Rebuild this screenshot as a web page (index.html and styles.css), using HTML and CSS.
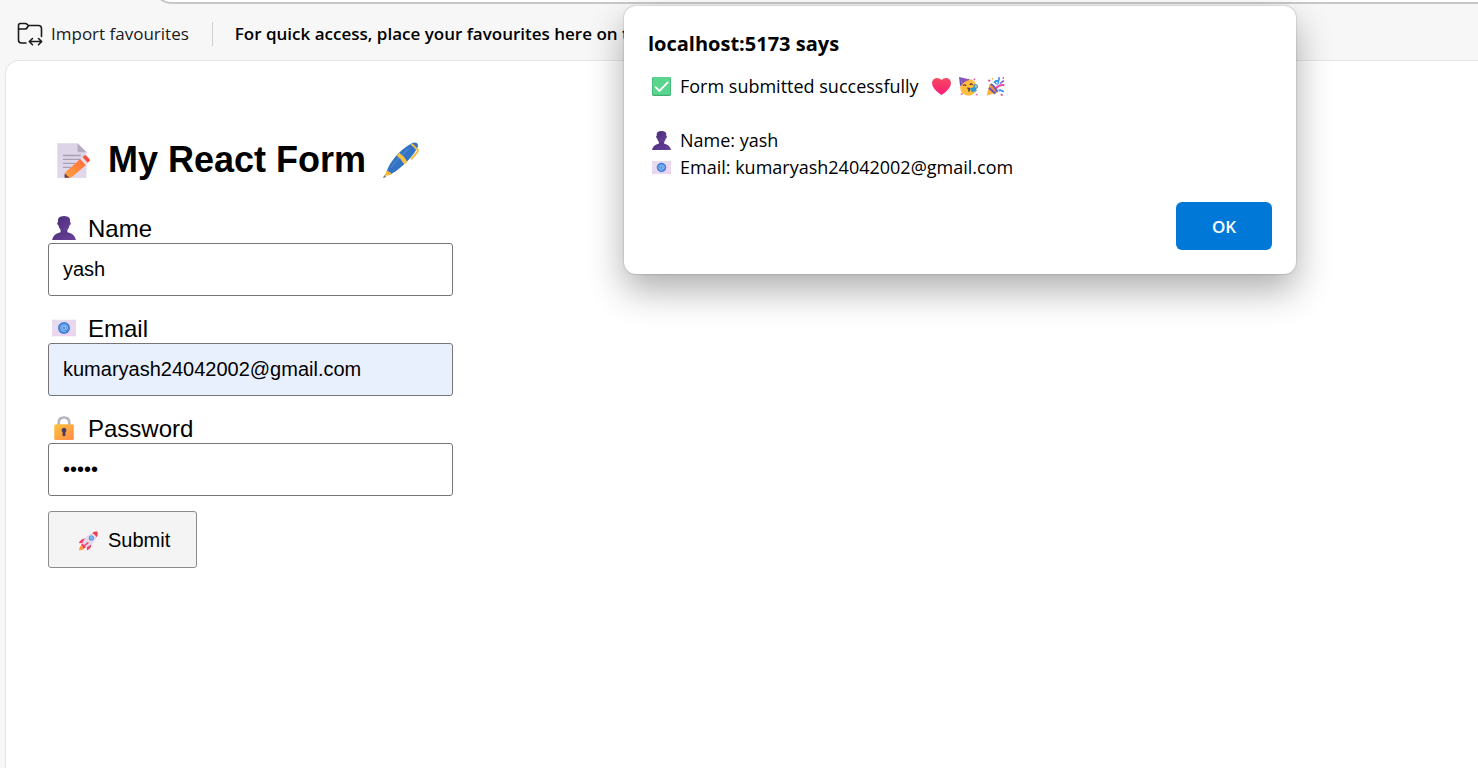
FILE: index.html
```html
<!DOCTYPE html>
<html lang="en">
<head>
<meta charset="utf-8">
<title>My React Form</title>
<link rel="stylesheet" href="styles.css">
</head>
<body>
<svg class="sprite" aria-hidden="true">
  <defs>
    <linearGradient id="paper" x1="0" y1="0" x2="0" y2="1"><stop offset="0" stop-color="#dcd3e6"/><stop offset="1" stop-color="#e2d8ea"/></linearGradient>
    <linearGradient id="orange" x1="1" y1="0" x2="0" y2="1"><stop offset="0" stop-color="#ff6a3d"/><stop offset="1" stop-color="#ffa23e"/></linearGradient>
    <linearGradient id="purple" x1="0" y1="0" x2="1" y2="1"><stop offset="0" stop-color="#4a2c78"/><stop offset="1" stop-color="#6b429c"/></linearGradient>
    <linearGradient id="gold" x1="0" y1="0" x2="1" y2="1"><stop offset="0" stop-color="#ffc43a"/><stop offset="1" stop-color="#ff8a4a"/></linearGradient>
    <linearGradient id="red" x1="0" y1="0" x2="0" y2="1"><stop offset="0" stop-color="#f4495f"/><stop offset="1" stop-color="#fb1c78"/></linearGradient>
    <linearGradient id="mail" x1="0" y1="0" x2="1" y2="1"><stop offset="0" stop-color="#e6dfee"/><stop offset="1" stop-color="#efd3f3"/></linearGradient>
  </defs>
  <symbol id="memo" viewBox="0 0 32 32">
    <path d="M2 1h18l8 8v23H2z" fill="url(#paper)"/>
    <path d="M20 1l8 8h-6.500q-1.500 0-1.500-1.500z" fill="#b6abc4"/>
    <path d="M7 12h16M7 15.500h16M7 19h11M7 22.500h7" stroke="#a8a0b2" stroke-width="1.200"/>
    <path d="M9 27L22.500 15l5 5.500L14.500 31.500H9z" fill="url(#orange)"/>
    <path d="M8.500 28v3.800h4.500z" fill="#6a3b48"/>
    <path d="M22.500 15l2-1.700 5 5.500-2 1.700z" fill="#e9dcea"/>
    <path d="M24.500 13.300l1.700-1.200q1-.6 1.900.3l2.500 2.700q.8 1-.1 2l-1.500 1.400z" fill="#f5503e"/>
  </symbol>
  <symbol id="pen" viewBox="0 0 32 32">
    <path d="M27.500 5q3 .5 3.400 2.200.4 1.200-.9 2.300L25 15.500" fill="none" stroke="#f5bd35" stroke-width="1.700"/>
    <path d="M3 28C4 22 9 14.500 15.500 8.500 20 4.500 25 1 28 .5q3.500 0 3 3.500-2 5-8 11.500C17 22 10 27.500 5 29.500z" fill="#3473c4"/>
    <path d="M7 23Q13 14 23 6" fill="none" stroke="#4482cf" stroke-width="1.500"/>
    <path d="M12 12l2.500-2.500q4.500 3 7 8L19 20q-2.500-5-7-8z" fill="#f7c242"/>
    <path d="M24.500 2.500l1.800-1q2.700 2 4.200 4.500l-.9 1.300q-2-3-5.100-4.800z" fill="#f7c242"/>
    <path d="M1 30.500l2.500-5q3.500 1 4.300 3.300z" fill="#f1b936"/><path d="M0 32l1-2.500 2 1.500z" fill="#707080"/>
  </symbol>
  <symbol id="bust" viewBox="0 0 32 32">
    <path d="M11.500 16h9v5.500Q30 23 32 32H0Q2 23 11.500 21.500z" fill="url(#purple)"/>
    <path d="M8 8Q6.500 0 16 0t8 8q1.300.2 1 2-.3 2.300-1.700 2.500Q22 19.500 16 19.500T8.700 12.500Q7.300 12.300 7 10q-.3-1.800 1-2z" fill="url(#purple)"/>
  </symbol>
  <symbol id="email" viewBox="0 0 32 32">
    <path d="M0 5h32v22H0z" fill="url(#mail)"/>
    <path d="M0 5l13 12M32 5L19 17M0 27l13-10M32 27L19 17" stroke="#dccbe3" stroke-width="1"/>
    <circle cx="16" cy="16" r="8" fill="#3f80d8"/>
    <circle cx="16" cy="16" r="2.200" fill="none" stroke="#a9d2ff" stroke-width="1.200"/>
    <path d="M18.200 13.500v3q0 2 1.600 1.400 1.200-.6.900-3Q20 11.500 16 11.500q-4.500.3-4.600 4.500.1 4.500 4.800 4.700 1.500 0 2.800-.7" fill="none" stroke="#a9d2ff" stroke-width="1.200"/>
  </symbol>
  <symbol id="lock" viewBox="0 0 32 32">
    <path d="M9 15V8.500q0-6.500 7-6.500t7 6.500V15" fill="none" stroke="#b9b2c3" stroke-width="3.500"/>
    <rect x="3" y="11" width="26" height="21" rx="2" fill="url(#gold)"/>
    <path d="M16 15.500a3.500 3.500 0 0 1 1.900 6.300V26q-1.900 2-3.800 0v-4.200A3.500 3.500 0 0 1 16 15.500z" fill="#4d3d66"/>
  </symbol>
  <symbol id="rocket" viewBox="0 0 32 32">
    <path d="M9 21q-6 0-8 8-.5 2.500 1.500 2Q9 30 10.500 23z" fill="#ff9a3c"/>
    <path d="M12 12Q5 11 1 18q-1 1.700 1 1.600l7-.6zM20 19q2 7-5 11.500-2 1-1.800-1L14 23z" fill="#f83f6e"/>
    <path d="M6 20Q10 8 22 3l7 7Q24 22 12 26z" fill="#e1d9ea"/>
    <path d="M22 3q4-2.500 8.500-2Q31.500 6 29 10q-2-4.500-7-7z" fill="#f03a4d"/>
    <path d="M6 20l6 6-2 1.500L4.500 22z" fill="#df2f62"/>
    <path d="M15 19q-5 3-7 8" fill="none" stroke="#f83f6e" stroke-width="2.500" stroke-linecap="round"/>
    <circle cx="20.500" cy="11" r="4" fill="#4b7fc8"/><circle cx="20.500" cy="11" r="2.900" fill="#76bdf8"/>
  </symbol>
  <symbol id="check" viewBox="0 0 32 32">
    <rect width="32" height="32" rx="2.500" fill="#3fae70"/><rect x="1" width="30" height="30" rx="2" fill="#59d58e"/>
    <path d="M6 17l6.500 6.500L26.500 9" fill="none" stroke="#fff" stroke-width="3" stroke-linecap="round"/>
  </symbol>
  <symbol id="heart" viewBox="0 0 32 32">
    <path d="M16 5Q19 1.500 24 1.500q7.500.5 8 8.500 0 9.500-16 20.500Q0 19.500 0 10 .5 2 8 1.500 13 1.500 16 5z" fill="url(#red)"/>
  </symbol>
  <symbol id="party" viewBox="0 0 32 32">
    <circle cx="16" cy="17.500" r="14" fill="#ffbd3e"/>
    <path d="M0 0l18 4Q7 6 2 16z" fill="#7251b8"/><path d="M5 1.500L4 11M11 3L8 8" stroke="#c65ac0" stroke-width="1.500"/>
    <path d="M3 14q5-8 14-10" fill="none" stroke="#8b58c0" stroke-width="2"/>
    <path d="M7 15q2.500-4 5 0M18 13.500q2.500-4 5 0" fill="none" stroke="#57363c" stroke-width="2"/>
    <path d="M14 19q3.500-.5 3.500 1.500t-2 1.500q2 .5 1 2.500" fill="none" stroke="#57363c" stroke-width="2.500"/>
    <path d="M18 19.500l9-3 3 7-8 2z" fill="#2d9cdb"/><circle cx="28" cy="16" r="3" fill="none" stroke="#2590da" stroke-width="2"/>
    <path d="M3 28l3 1M25 3l2 2M29 29l2 1" stroke="#e94fa7" stroke-width="2.500"/>
  </symbol>
  <symbol id="popper" viewBox="0 0 32 32">
    <path d="M1 31L6 12q10 4 14 14z" fill="#ffb53c"/>
    <path d="M5 18l11 10" stroke="#6757bd" stroke-width="3.500"/>
    <path d="M6 12q4-1 9.500 4t4.500 10q-5-1-9.500-6T6 12z" fill="#ef8d42"/>
    <path d="M8 12q5 1 11 13" fill="none" stroke="#6757bd" stroke-width="3"/>
    <path d="M14 10q1-4 6-2.500 3-3 1.500-7" fill="none" stroke="#3796ed" stroke-width="3"/>
    <circle cx="18.500" cy="9" r="3" fill="none" stroke="#3796ed" stroke-width="2"/>
    <path d="M17 19Q22 12 31 14" fill="none" stroke="#e74ba5" stroke-width="3.500"/>
    <path d="M21 23q4-2 9 2" fill="none" stroke="#3594e8" stroke-width="3"/>
    <path d="M24 11l6-5" stroke="#7355c4" stroke-width="2.500"/>
    <path d="M4 5l3 2M28 1l2 1M25 29l3 2" stroke="#ed4a93" stroke-width="3"/><circle cx="11" cy="3" r="1.500" fill="#f9bb38"/>
  </symbol>
</svg>

<header class="browser-bar">
  <div class="address-edge"></div>
  <nav class="favourites">
    <button class="import" type="button">
      <svg class="import-icon" viewBox="0 0 26 24" aria-hidden="true">
        <path d="M9 21H4.500Q1.500 21 1.500 18V3.500Q1.500 1.500 3.500 1.500H8Q9.500 1.500 10.500 2.700L11.500 3.500H21.500Q24.500 3.500 24.500 6.500V14.500M1.500 7H8Q9.500 7 10.300 5.500L11.500 3.500M12.500 19.500H24M15.500 16.500L12.300 19.500l3.200 3.200M21.500 16.500l3.200 3-3.200 3.200"/>
      </svg>
      <span>Import favourites</span>
    </button>
    <p class="hint">For quick access, place your favourites here on t</p>
  </nav>
</header>

<main class="page">
  <form class="form">
    <h1 class="title">
      <svg class="title-icon" aria-hidden="true"><use href="#memo"/></svg>
      <span>My React Form</span>
      <svg class="title-icon" aria-hidden="true"><use href="#pen"/></svg>
    </h1>
    <div class="field">
      <label class="label" for="name"><svg class="label-icon" aria-hidden="true"><use href="#bust"/></svg>Name</label>
      <input class="input" id="name" type="text" value="yash">
    </div>
    <div class="field">
      <label class="label" for="email-input"><svg class="label-icon" aria-hidden="true"><use href="#email"/></svg>Email</label>
      <input class="input filled" id="email-input" type="email" value="kumaryash24042002@gmail.com">
    </div>
    <div class="field">
      <label class="label" for="password"><svg class="label-icon" aria-hidden="true"><use href="#lock"/></svg>Password</label>
      <input class="input" id="password" type="password" value="12345">
    </div>
    <button class="submit" type="submit"><svg class="submit-icon" aria-hidden="true"><use href="#rocket"/></svg>Submit</button>
  </form>
</main>

<dialog class="alert" open aria-labelledby="alert-title">
  <h2 class="alert-title" id="alert-title">localhost:5173 says</h2>
  <div class="message">
    <p class="line">
      <svg class="line-icon" aria-hidden="true"><use href="#check"/></svg>
      <span class="status">Form submitted successfully</span>
      <span class="cheers">
        <svg class="line-icon" aria-hidden="true"><use href="#heart"/></svg>
        <svg class="line-icon" aria-hidden="true"><use href="#party"/></svg>
        <svg class="line-icon" aria-hidden="true"><use href="#popper"/></svg>
      </span>
    </p>
    <p class="line spaced"><svg class="line-icon" aria-hidden="true"><use href="#bust"/></svg><span>Name: yash</span></p>
    <p class="line"><svg class="line-icon" aria-hidden="true"><use href="#email"/></svg><span>Email: kumaryash24042002@gmail.com</span></p>
  </div>
  <form class="actions" method="dialog"><button class="ok" type="submit">OK</button></form>
</dialog>
</body>
</html>
```

FILE: styles.css
```css
* { box-sizing: border-box; }
html { height: 100%; }
body {
  margin: 0;
  min-height: 100%;
  display: flex;
  flex-direction: column;
  overflow: hidden;
  background: #f7f7f7;
  color: #000;
  font-family: "Liberation Sans", Arial, sans-serif;
}
h1, h2, p { margin: 0; font-weight: inherit; }
.sprite { position: absolute; width: 0; height: 0; }

.browser-bar { font-family: "Open Sans", "Noto Sans", sans-serif; }
.address-edge {
  height: 40px;
  margin: -36px 0 0 152px;
  border: 1px solid #c8c8c8;
  border-width: 0 0 2px 2px;
  border-radius: 0 0 0 20px;
  background: #fff;
}
.favourites { display: flex; align-items: center; height: 56px; padding: 3px 0 0 17px; white-space: nowrap; }
.import {
  display: flex;
  align-items: center;
  gap: 8px;
  padding: 0 23px 0 0;
  border: 0;
  border-right: 1px solid #cfcfcf;
  background: none;
  color: #1a1a1a;
  font: 17px/24px "Open Sans", "Noto Sans", sans-serif;
}
.import-icon { width: 26px; height: 24px; fill: none; stroke: #1a1a1a; stroke-width: 1.6; stroke-linecap: round; stroke-linejoin: round; }
.hint { padding-left: 22px; font-size: 17px; line-height: 24px; font-weight: 600; }

.page {
  flex: 1;
  margin-left: 5px;
  padding: 75px 42px;
  border: 1px solid #e6e6e6;
  border-width: 1px 0 0 1px;
  border-radius: 14px 0 0 0;
  background: #fff;
}
.form { max-width: 405px; }
.title { display: flex; align-items: center; gap: 17px; height: 48px; margin-bottom: 31px; padding-left: 7px; font-size: 36px; font-weight: 700; white-space: nowrap; }
.title-icon { width: 36px; height: 36px; flex: none; }
.field { margin-bottom: 15px; }
.field + .field { margin-top: 19px; }
.label { display: flex; align-items: flex-start; gap: 12px; height: 28px; padding: 0 4px; font-size: 24px; line-height: 27px; }
.label-icon { width: 24px; height: 24px; margin-top: 1px; }
.input {
  display: block;
  width: 100%;
  height: 53px;
  padding: 0 14px;
  border: 1px solid #767676;
  border-radius: 3px;
  background: #fff;
  color: #000;
  font: 20px "Liberation Sans", Arial, sans-serif;
}
.filled { background: #e8f0fe; }
.submit {
  display: flex;
  align-items: center;
  gap: 9px;
  height: 57px;
  padding: 2px 26px 0 29px;
  border: 1px solid #8b8b8b;
  border-radius: 3px;
  background: #f4f4f4;
  color: #000;
  font: 20px "Liberation Sans", Arial, sans-serif;
}
.submit-icon { width: 21px; height: 20px; }

.alert {
  position: absolute;
  top: 6px;
  left: 624px;
  right: 182px;
  width: auto;
  margin: 0;
  padding: 24px;
  border: 0;
  border-radius: 12px;
  background: #fff;
  color: #000;
  box-shadow: 0 0 2px rgba(0, 0, 0, .3), 0 16px 36px rgba(0, 0, 0, .32);
  font-family: "Open Sans", "Noto Sans", sans-serif;
}
.alert-title { font-size: 20px; line-height: 28px; font-weight: 700; }
.message { margin-top: 15px; }
.line { display: flex; align-items: center; gap: 9px; height: 27px; padding-left: 4px; font-size: 18px; line-height: 27px; white-space: nowrap; }
.line.spaced { margin-top: 27px; }
.line-icon { width: 19px; height: 19px; flex: none; }
.status { min-width: 243px; }
.cheers { display: flex; gap: 8px; }
.actions { display: flex; justify-content: flex-end; margin-top: 21px; }
.ok { width: 96px; height: 48px; border: 0; border-radius: 6px; background: #0078d7; color: #fff; font: 600 17px "Open Sans", "Noto Sans", sans-serif; }
```
